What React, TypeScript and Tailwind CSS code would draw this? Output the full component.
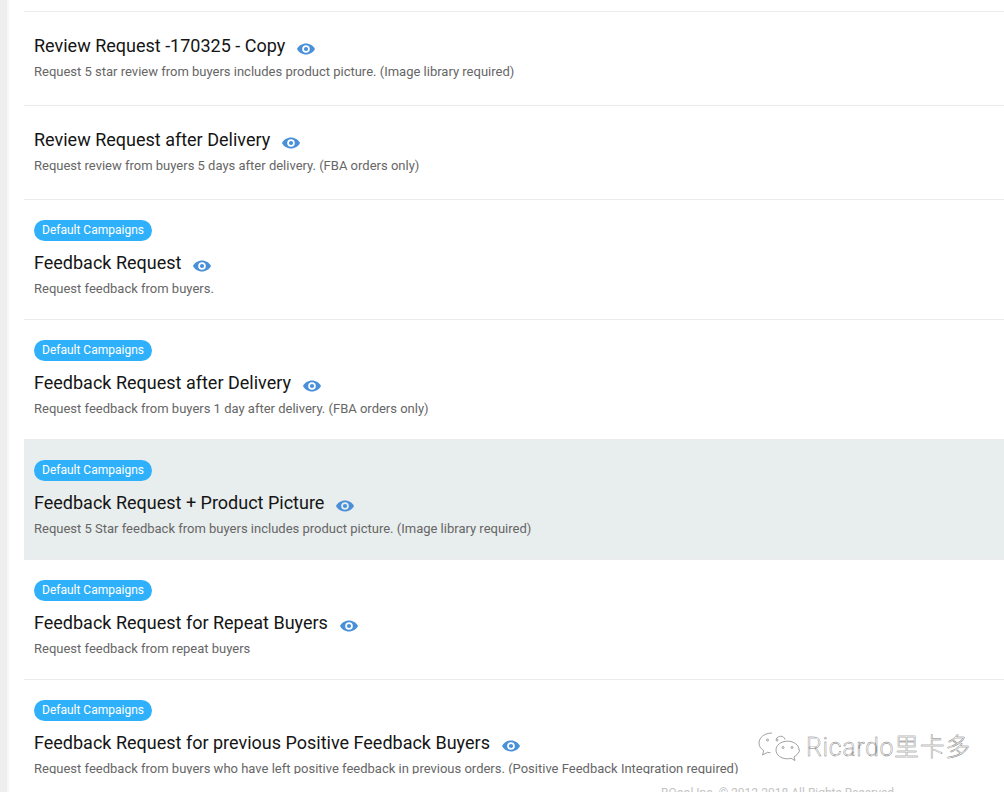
const rows = [
  { title: 'Review Request -170325 - Copy', desc: 'Request 5 star review from buyers includes product picture. (Image library required)' },
  { title: 'Review Request after Delivery', desc: 'Request review from buyers 5 days after delivery. (FBA orders only)' },
  { title: 'Feedback Request', desc: 'Request feedback from buyers.', badge: true },
  { title: 'Feedback Request after Delivery', desc: 'Request feedback from buyers 1 day after delivery. (FBA orders only)', badge: true },
  { title: 'Feedback Request + Product Picture', desc: 'Request 5 Star feedback from buyers includes product picture. (Image library required)', badge: true, active: true },
  { title: 'Feedback Request for Repeat Buyers', desc: 'Request feedback from repeat buyers', badge: true },
  { title: 'Feedback Request for previous Positive Feedback Buyers', desc: 'Request feedback from buyers who have left positive feedback in previous orders. (Positive Feedback Integration required)', badge: true },
];

function Eye() {
  return (
    <svg width="18" height="12" viewBox="0 0 18 12" className="ml-3 mt-[7px] shrink-0">
      <path fillRule="evenodd" fill="#4a90d9" d="M9 0.5C5 0.5 1.700 2.800 0 6c1.700 3.200 5 5.500 9 5.500s7.300-2.300 9-5.500C16.300 2.800 13 0.500 9 0.500zM9 9.800A3.800 3.800 0 1 1 9 2.200a3.800 3.800 0 0 1 0 7.600z" />
      <circle cx="9" cy="6" r="2.100" fill="#4a90d9" />
    </svg>
  );
}

function Row({ title, desc, badge, active }: { title: string; desc: string; badge?: boolean; active?: boolean }) {
  return (
    <div className={`border-b border-[#ececec] px-[10px] pt-5 ${badge ? 'h-[120px]' : 'h-[94px]'} ${active ? 'bg-[#e8eded]' : ''}`}>
      {badge && (
        <span className="mb-2 flex h-[21px] w-[118px] items-center justify-center rounded-full bg-[#2fb0fb] pb-0.5 text-[12px] text-white">
          Default Campaigns
        </span>
      )}
      <div className="flex h-[26px] items-center">
        <span className="text-[18px] text-[#151515]">{title}</span>
        <Eye />
      </div>
      <p className="mt-[5px] text-[13px] leading-[18px] text-[#666]">{desc}</p>
    </div>
  );
}

export default function App() {
  return (
    <div className="relative flex h-[792px] w-[1004px] overflow-hidden bg-white font-['Roboto',sans-serif]">
      <div className="h-full w-[7px] shrink-0 bg-[#eeeeee]" />
      <div className="h-full w-0.5 shrink-0 bg-[#f7f7f7]" />
      <div className="ml-[15px] flex-1">
        <div className="h-3 border-b border-[#ececec]" />
        <div className="h-[762px] overflow-hidden">
          {rows.map((r) => (
            <Row key={r.title} {...r} />
          ))}
        </div>
        <p className="ml-[637px] mt-2.5 whitespace-nowrap text-[12px] text-[#c4c4c4]">BQool Inc. © 2012-2018 All Rights Reserved</p>
      </div>
      <div className="absolute left-[758px] top-[732px] flex items-center">
        <svg width="42" height="32" viewBox="0 0 42 32" fill="none" stroke="#8a8a8a" strokeWidth="0.8">
          <path d="M14 1C6.500 1 1 5.600 1 11c0 3.200 1.800 5.800 4.700 7.700L4.500 23l5-2.700c1 .3 2 .4 3 .5" />
          <path d="M18 7C20 3.500 26 3 27 7.500" />
          <path d="M41 18c0-5-5-8.800-11.500-8.800S18 13 18 18s5 8.800 11.500 8.800c1.300 0 2.400-.2 3.500-.5l4 2.200-1-3.600c3-1.800 5.500-4.500 5.500-6.900z" />
          <circle cx="9.500" cy="8" r="1" />
          <circle cx="19" cy="8" r="1" />
          <circle cx="25" cy="15.500" r="1" />
          <circle cx="34" cy="15.500" r="1" />
        </svg>
        <span className="ml-[6px] text-[25px] font-['Roboto','Noto_Sans_CJK_SC',sans-serif] font-light leading-8 tracking-[0.6px] text-white [-webkit-text-stroke:0.4px_#777]">Ricardo里卡多</span>
      </div>
    </div>
  );
}
